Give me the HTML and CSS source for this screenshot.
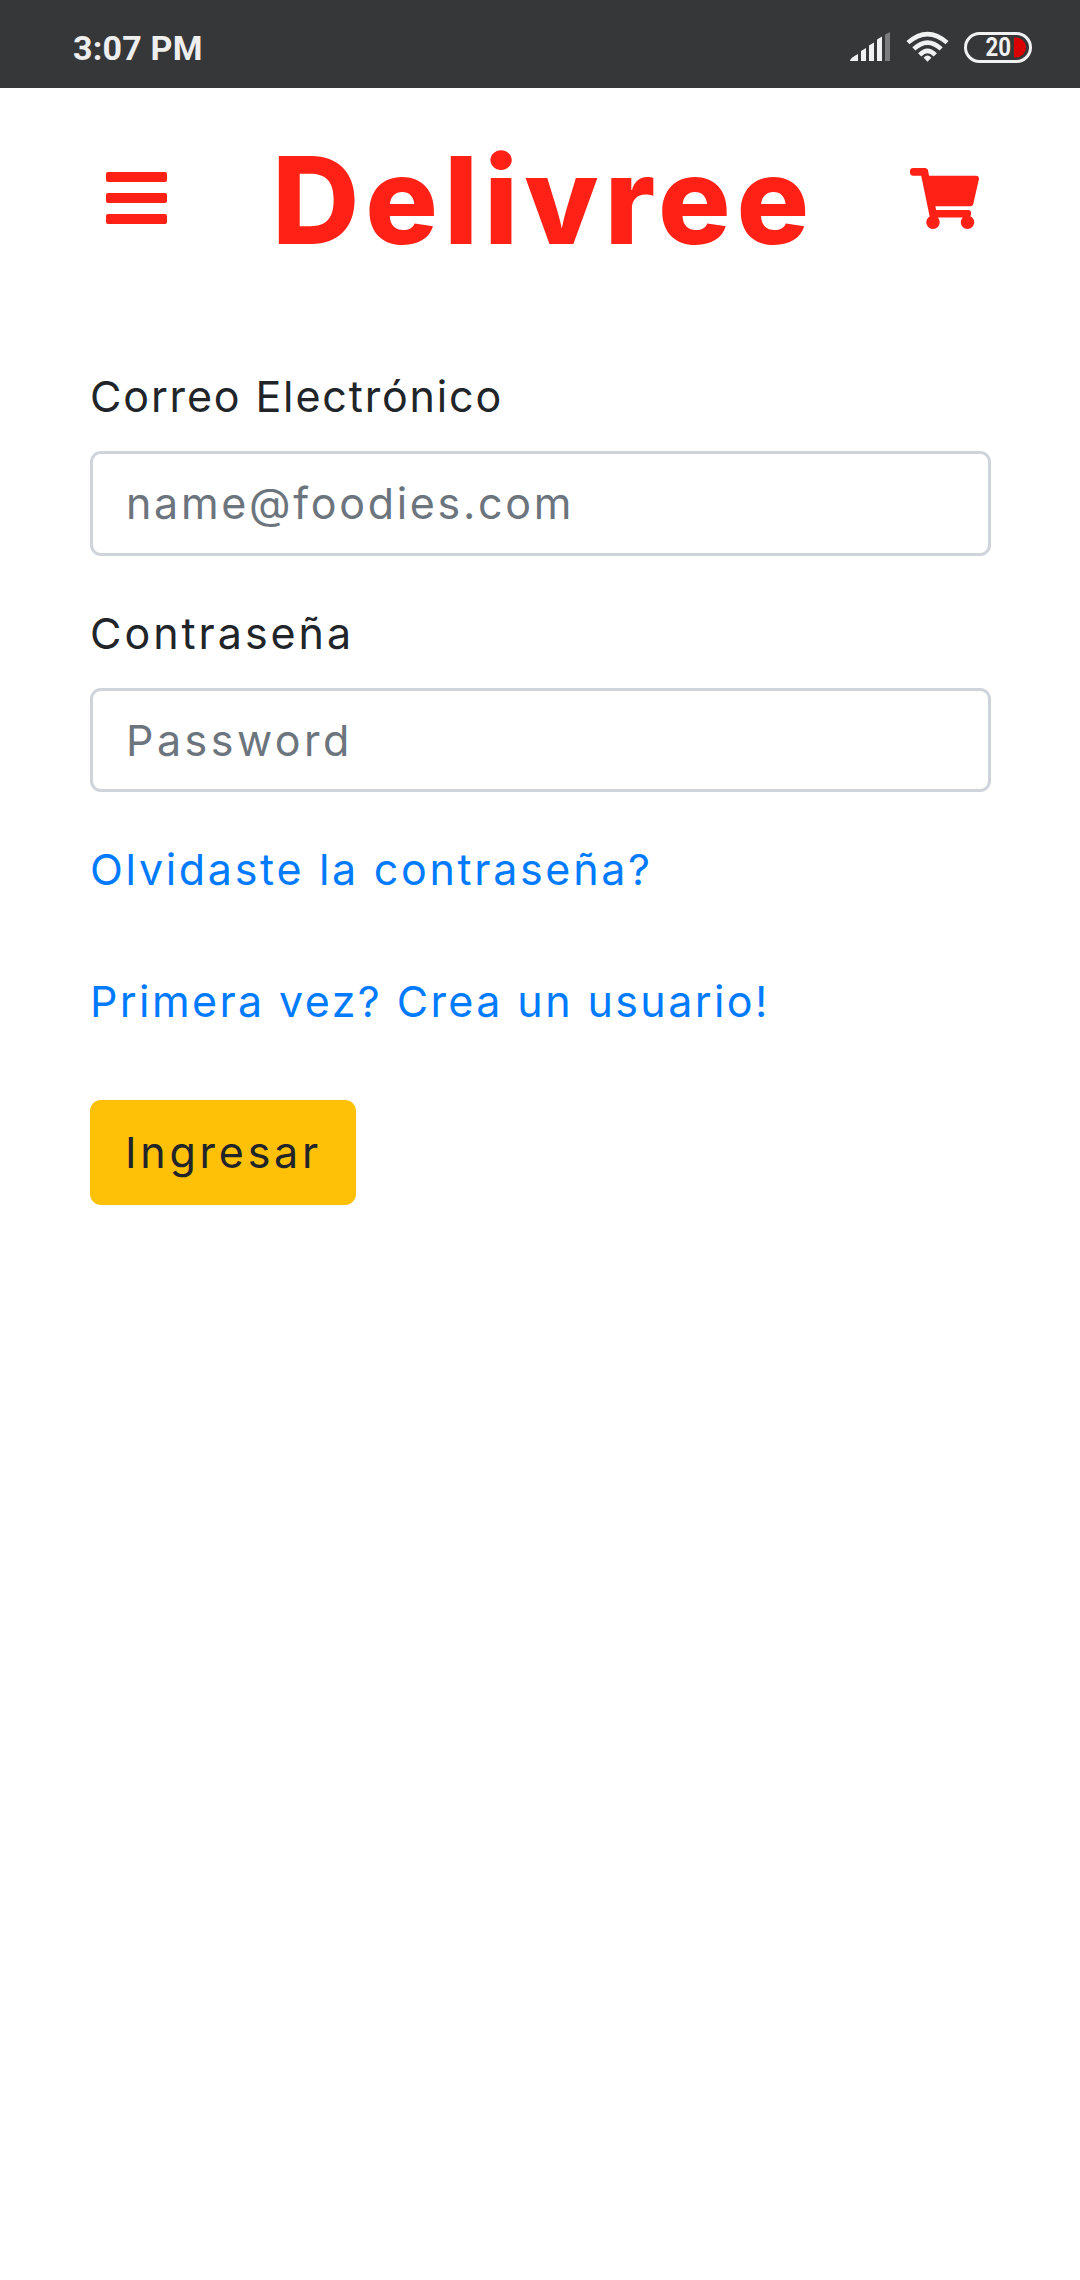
FILE: index.html
```html
<!DOCTYPE html>
<html lang="es">
<head>
<meta charset="utf-8">
<title>Delivree</title>
<link rel="stylesheet" href="styles.css">
</head>
<body>
<div class="status">
  <span class="clock">3:07 PM</span>
  <div class="indicators">
    <svg class="signal" width="42" height="30" viewBox="0 0 42 30"><g fill="#f1f1f1"><path d="M1 29q0-3 8-7v7zM12 19l5-3v13h-5zM20 13.500l5-3v18.500h-5zM28 7.500l5-3v24.500h-5z"/></g><path d="M36 2.500l5-2.500v29h-5z" fill="#7b7c7e"/></svg>
    <svg class="wifi" width="43" height="32" viewBox="0 0 44 32" fill="none" stroke="#f1f1f1" stroke-width="4.600"><path d="M2 11.500Q22-6 42 11.500M8 18Q22 5 36 18M14 24Q22 16 30 24"/><path d="M22 31l-4-4q4-4.500 8 0z" fill="#f1f1f1" stroke="none"/></svg>
    <svg class="battery" width="68" height="31" viewBox="0 0 68 31"><rect x="1.500" y="1.500" width="65" height="28" rx="14" fill="none" stroke="#f1f1f1" stroke-width="3"/><path d="M50 5.500h2a10 10 0 0 1 0 20h-2z" fill="#d80000"/><text class="charge" x="21.500" y="24" textLength="25.500" lengthAdjust="spacingAndGlyphs">20</text></svg>
  </div>
</div>
<header class="header">
  <svg class="menu" width="62" height="54" viewBox="0 0 62 54" fill="#ff2016"><rect x="0" y="0" width="61" height="10" rx="2"/><rect x="0" y="21" width="61" height="10" rx="2"/><rect x="0" y="42" width="61" height="10" rx="2"/></svg>
  <h1 class="brand">Delivree</h1>
  <svg class="cart" width="69" height="61" viewBox="0 0 576 512" preserveAspectRatio="none" fill="#ff2016"><path d="M528.120 301.319l47.273-208C578.806 78.301 567.391 64 551.990 64H159.208l-9.166-44.810C147.758 8.021 137.930 0 126.529 0H24C10.745 0 0 10.745 0 24v16c0 13.255 10.745 24 24 24h69.883l70.248 343.435C147.325 417.100 136 435.222 136 456c0 30.928 25.072 56 56 56s56-25.072 56-56c0-15.674-6.447-29.835-16.824-40h209.647C430.447 426.165 424 440.326 424 456c0 30.928 25.072 56 56 56s56-25.072 56-56c0-22.172-12.888-41.332-31.579-50.405l5.517-24.276c3.413-15.018-8.002-29.319-23.403-29.319H218.117l-6.545-32h293.145c11.206 0 20.920-7.754 23.403-18.681z"/></svg>
</header>
<form class="form">
  <label class="label label-mail" for="mail">Correo Electrónico</label>
  <input class="field field-mail" id="mail" type="email" placeholder="name@foodies.com">
  <label class="label label-pass" for="pass">Contraseña</label>
  <input class="field field-pass" id="pass" type="password" placeholder="Password">
  <a class="link link-forgot">Olvidaste la contraseña?</a>
  <a class="link link-new">Primera vez? Crea un usuario!</a>
  <button class="submit" type="button">Ingresar</button>
</form>
</body>
</html>
```
FILE: styles.css
```css
* { box-sizing: border-box; }
body { margin: 0; background: #fff; font-family: Inter, "Noto Sans", sans-serif; color: #212529; }
.status { height: 88px; background: #363739; display: flex; justify-content: space-between; align-items: center; padding: 6px 48px 0 73px; }
.clock { font: 700 34px/40px Roboto, sans-serif; color: #eee; letter-spacing: 0.2px; padding-top: 2px; }
.indicators { display: flex; align-items: center; gap: 15px; }
.charge { font: 700 25px Roboto, sans-serif; fill: #f1f1f1; }
.header { height: 275px; padding: 0 101px 0 106px; display: flex; align-items: flex-start; }
.menu { margin-top: 84px; }
.cart { margin: 80px 0 0 auto; }
.brand { margin: 37px 0 0 104px; font-size: 121px; line-height: 150px; font-weight: 800; letter-spacing: 5.900px; color: #ff2016; }
.form { display: flex; flex-direction: column; align-items: flex-start; padding: 0 89px 0 90px; font-size: 43px; font-weight: 400; }
.label { line-height: 66px; margin-bottom: 22px; }
.label-mail { letter-spacing: 1.850px; }
.label-pass { margin-top: 44px; letter-spacing: 2.980px; }
.field { width: 100%; height: 105px; border: 3px solid #ced4da; border-radius: 11px; padding: 0 33px 2px; font: inherit; background: #fff; }
.field-mail { letter-spacing: 2.700px; }
.field-pass { height: 104px; letter-spacing: 3.470px; padding-bottom: 0; }
.field::placeholder { color: #6c757d; opacity: 1; }
.link { color: #007bff; line-height: 66px; }
.link-forgot { margin-top: 44px; letter-spacing: 2.690px; }
.link-new { margin-top: 66px; letter-spacing: 2.400px; }
.submit { width: 266px; height: 105px; margin-top: 66px; padding: 0 0 1px 35px; text-align: left; background: #ffc107; border: 0; border-radius: 11px; font: inherit; letter-spacing: 3.760px; color: #212529; }
```
